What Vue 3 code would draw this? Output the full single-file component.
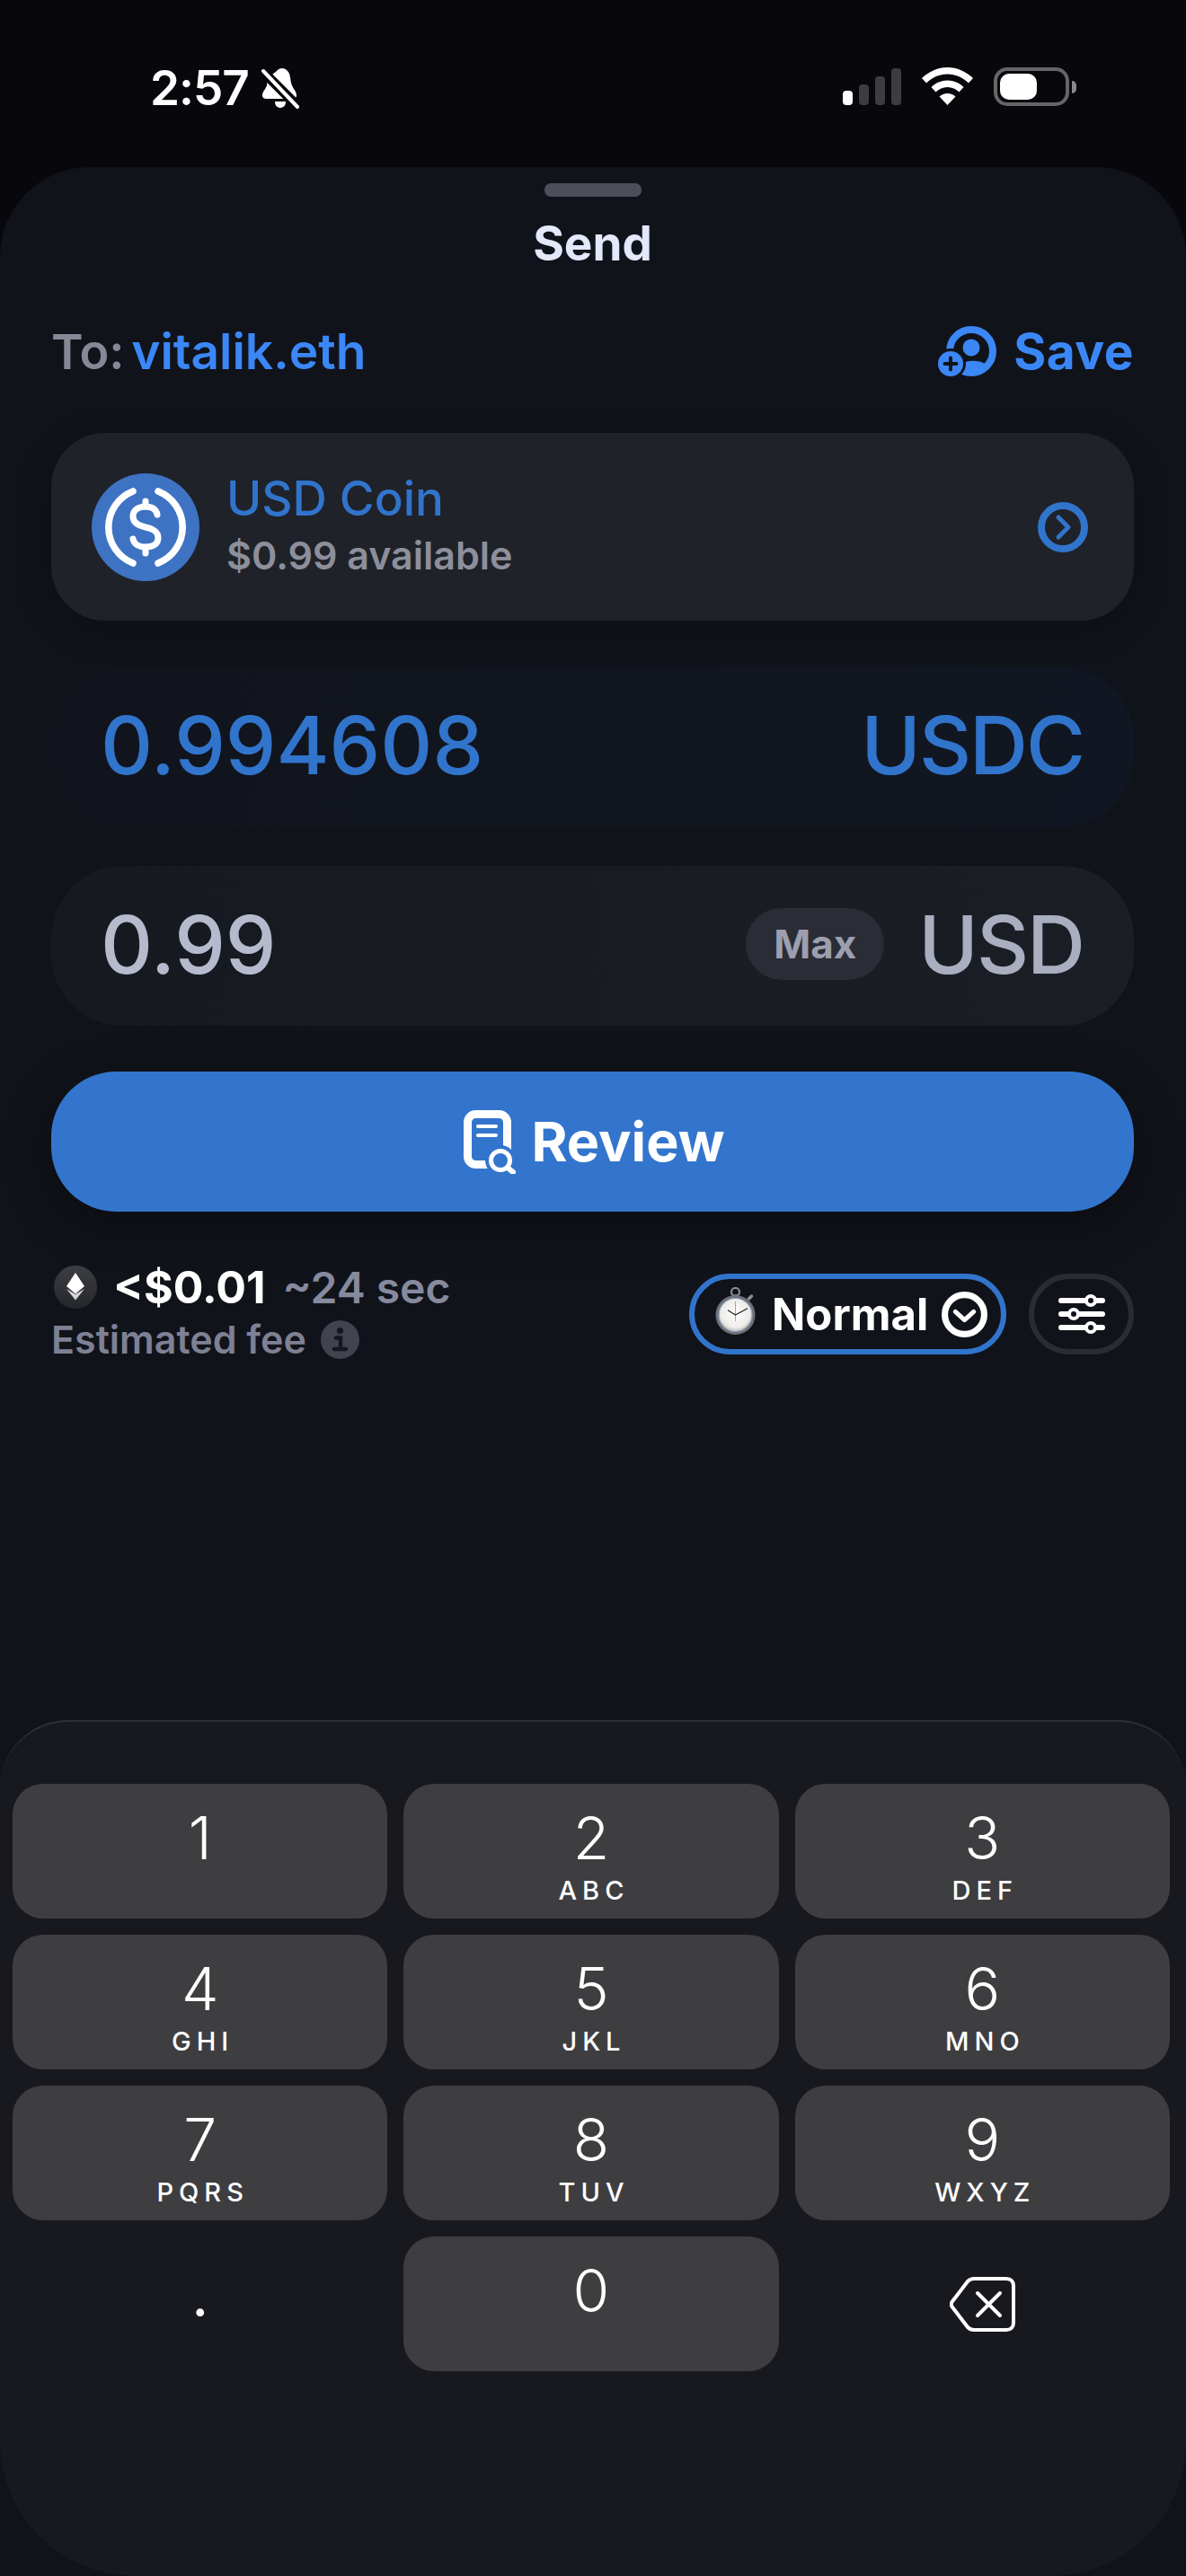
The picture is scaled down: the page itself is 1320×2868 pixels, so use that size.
<template>
  <div class="screen">
    <div class="status">
      <div class="status-left">
        <span class="time">2:57</span>
        <svg class="bell" viewBox="0 0 42 47">
          <path fill="#fff" d="M17 4c3-4 9-4 12 0 3 3 3 8 4 13 1 6 6 9 6 14 0 3-2 4-5 4H6c-3 0-5-1-5-4 0-4 4-7 5-11l1-8z"/>
          <path fill="#fff" d="M15 38h12c0 5-3 7-6 7s-6-2-6-7z"/>
          <path stroke="#08080c" stroke-width="11" d="M0 3l42 42"/>
          <path stroke="#fff" stroke-width="4" stroke-linecap="round" d="M2 4l38 40"/>
        </svg>
      </div>
      <div class="status-right">
        <div class="signal">
          <span v-for="(h, i) in signalBars" :key="i" class="bar" :class="{ on: i === 0 }" :style="{ height: h + 'px' }"></span>
        </div>
        <svg class="wifi" viewBox="0 0 57 42">
          <path fill="#fff" d="M28.500 0C39 0 49 4.500 57 12l-5 5.500C45.500 11 37 7.500 28.500 7.500S11.500 11 5 17.500L0 12C8 4.500 18 0 28.500 0z"/>
          <path fill="#fff" d="M28.500 14.500c7 0 13 2.800 18 7.500l-5 5.500c-3.500-3.400-8-5.500-13-5.500s-9.500 2.100-13 5.500l-5-5.500c5-4.700 11-7.500 18-7.500z"/>
          <path fill="#fff" d="M28.500 29c3.500 0 6.500 1.300 9 3.500L28.500 42l-9-9.500c2.500-2.200 5.500-3.500 9-3.500z"/>
        </svg>
        <div class="battery">
          <div class="battery-body"><div class="battery-fill"></div></div>
          <div class="battery-nub"></div>
        </div>
      </div>
    </div>

    <div class="sheet">
      <div class="handle"></div>
      <div class="title">Send</div>

      <div class="to-row">
        <div class="to"><span class="to-label">To:</span> <span class="to-name">vitalik.eth</span></div>
        <div class="save">
          <svg class="save-icon" viewBox="0 0 65 56">
            <circle cx="37" cy="28" r="24" fill="none" stroke="#3b87f6" stroke-width="8"/>
            <circle cx="37" cy="24" r="9.500" fill="#3b87f6"/>
            <path fill="#3b87f6" d="M21 46c7-9 25-9 33-3 -4 6-10 9-17 9-6 0-12-2-16-6z"/>
            <circle cx="14" cy="42" r="17" fill="#11131a"/>
            <circle cx="14" cy="42" r="14" fill="#3b87f6"/>
            <path stroke="#11131a" stroke-width="4" stroke-linecap="round" d="M14 35.500v13M7.500 42h13"/>
          </svg>
          <span>Save</span>
        </div>
      </div>

      <div class="token-card">
        <svg class="usdc" viewBox="0 0 120 120">
          <circle cx="60" cy="60" r="60" fill="#3e73c4"/>
          <g fill="none" stroke="#fff" stroke-width="7.500" stroke-linecap="round">
            <path d="M46 20A43 43 0 0 0 46 100"/>
            <path d="M74 20A43 43 0 0 1 74 100"/>
            <path stroke-width="7" d="M73 46c-1-6-6-9-13-9-8 0-14 4-14 11 0 6 5 10 14 12 9 2 14 5 14 12 0 7-6 10-14 10-7 0-13-3-14-9"/>
            <path stroke-width="7" d="M60 31v6M60 83v6"/>
          </g>
        </svg>
        <div class="token-text">
          <div class="token-name">USD Coin</div>
          <div class="token-avail">$0.99 available</div>
        </div>
        <svg class="token-go" viewBox="0 0 56 56">
          <circle cx="28" cy="28" r="24" fill="none" stroke="#3174cc" stroke-width="8"/>
          <path fill="none" stroke="#3174cc" stroke-width="5" stroke-linecap="round" stroke-linejoin="round" d="M23 17l11 11-11 11"/>
        </svg>
      </div>

      <div class="amount amount-token">
        <span class="amount-value">0.994608</span>
        <span class="amount-unit">USDC</span>
      </div>

      <div class="amount amount-fiat">
        <span class="amount-value">0.99</span>
        <div class="amount-right">
          <span class="max">Max</span>
          <span class="amount-unit">USD</span>
        </div>
      </div>

      <div class="review">
        <svg class="review-icon" viewBox="0 0 58 71">
          <rect x="4.500" y="4.500" width="44" height="56" rx="9" fill="none" stroke="#fff" stroke-width="9"/>
          <path stroke="#fff" stroke-width="4" stroke-linecap="round" d="M16 18h20M16 28h20"/>
          <circle cx="41" cy="56" r="17" fill="#3375cd"/>
          <circle cx="41" cy="56" r="10.500" fill="none" stroke="#fff" stroke-width="5"/>
          <path stroke="#fff" stroke-width="6" stroke-linecap="round" d="M49 64l6 5"/>
        </svg>
        <span>Review</span>
      </div>

      <div class="fee-row">
        <div class="fee">
          <div class="fee-top">
            <svg class="eth" viewBox="0 0 48 48">
              <defs>
                <linearGradient id="ethbg" x1="0" y1="0" x2="0" y2="1">
                  <stop offset="0" stop-color="#3d3e43"/>
                  <stop offset="1" stop-color="#25262a"/>
                </linearGradient>
              </defs>
              <circle cx="24" cy="24" r="24" fill="url(#ethbg)"/>
              <path fill="#fff" d="M24 8l10 15-10 8.500L14 23z"/>
              <path fill="#fff" opacity=".8" d="M14 26l10 6 10-6-10 12.500z"/>
            </svg>
            <span class="fee-price">&lt;$0.01</span>
            <span class="fee-time">~24 sec</span>
          </div>
          <div class="fee-bottom">
            <span>Estimated fee</span>
            <svg class="info" viewBox="0 0 43 43">
              <circle cx="21.500" cy="21.500" r="21.500" fill="#42434f"/>
              <circle cx="21.500" cy="11.500" r="3.500" fill="#15161e"/>
              <path fill="none" stroke="#15161e" stroke-width="4.500" stroke-linecap="round" d="M17 19.500h5v12M15 32h13"/>
            </svg>
          </div>
        </div>
        <div class="fee-actions">
          <div class="speed">
            <svg class="stopwatch" viewBox="0 0 44 53">
              <defs>
                <radialGradient id="face" cx="0.500" cy="0.450" r="0.550">
                  <stop offset="0" stop-color="#fff"/>
                  <stop offset="0.800" stop-color="#ecebe8"/>
                  <stop offset="1" stop-color="#b9b8b5"/>
                </radialGradient>
              </defs>
              <circle cx="22" cy="5.500" r="4.500" fill="none" stroke="#8a8d93" stroke-width="2.200"/>
              <rect x="19" y="8" width="6" height="4" fill="#777a80"/>
              <path stroke="#8a8d93" stroke-width="3.500" stroke-linecap="round" d="M37 13l3-3"/>
              <circle cx="22" cy="31" r="22" fill="#6d7077"/>
              <circle cx="22" cy="31" r="18.500" fill="url(#face)" stroke="#8ba2bd" stroke-width="1.200"/>
              <path stroke="#e0926a" stroke-width="1" d="M22 16v22"/>
              <path stroke="#22252b" stroke-width="1.300" stroke-linecap="round" d="M22 31l13-7M22 31l-8-5"/>
            </svg>
            <span class="speed-label">Normal</span>
            <svg class="speed-go" viewBox="0 0 50 50">
              <circle cx="25" cy="25" r="21.500" fill="none" stroke="#fff" stroke-width="7"/>
              <path fill="none" stroke="#fff" stroke-width="5" stroke-linecap="round" stroke-linejoin="round" d="M15 22l10 9 10-9"/>
            </svg>
          </div>
          <div class="tune">
            <svg class="tune-icon" viewBox="0 0 52 44">
              <g stroke="#fff" stroke-width="6" stroke-linecap="round">
                <path d="M3 7h46M3 22h46M3 37h46"/>
              </g>
              <g fill="#11131a" stroke="#fff" stroke-width="4">
                <circle cx="36" cy="7" r="5"/>
                <circle cx="17" cy="22" r="5"/>
                <circle cx="36" cy="37" r="5"/>
              </g>
            </svg>
          </div>
        </div>
      </div>

      <div class="pad">
        <div class="keys">
          <div v-for="k in keys" :key="k.d" class="key">
            <span class="digit">{{ k.d }}</span>
            <span class="letters">{{ k.l }}</span>
          </div>
          <div class="key bare">
            <span class="digit dot">.</span>
          </div>
          <div class="key">
            <span class="digit">0</span>
          </div>
          <div class="key bare center">
            <svg class="backspace" viewBox="0 0 73 61">
              <path fill="none" stroke="#fff" stroke-width="4" stroke-linejoin="round" d="M27 2h36c5 0 8 3 8 8v41c0 5-3 8-8 8H27c-3 0-5-1-7-3L4 35c-3-3-3-6 0-9L20 5c2-2 4-3 7-3z"/>
              <path fill="none" stroke="#fff" stroke-width="4" stroke-linecap="round" d="M31 18l25 25M56 18L31 43"/>
            </svg>
          </div>
        </div>
      </div>
    </div>
  </div>
</template>

<script setup>
const signalBars = [16, 23, 32, 41]

const keys = [
  { d: '1', l: '' },
  { d: '2', l: 'ABC' },
  { d: '3', l: 'DEF' },
  { d: '4', l: 'GHI' },
  { d: '5', l: 'JKL' },
  { d: '6', l: 'MNO' },
  { d: '7', l: 'PQRS' },
  { d: '8', l: 'TUV' },
  { d: '9', l: 'WXYZ' },
]
</script>

<style>
html, body {
  margin: 0;
  background: #08080c;
}
</style>

<style scoped>
.screen {
  width: 1320px;
  height: 2868px;
  display: flex;
  flex-direction: column;
  background: #08080c;
  font-family: Inter, "Liberation Sans", sans-serif;
  color: #fff;
  overflow: hidden;
}

/* status bar */
.status {
  height: 186px;
  flex: none;
  display: flex;
  justify-content: space-between;
  align-items: flex-start;
  padding: 75px 122px 0 167px;
  box-sizing: border-box;
}
.status-left {
  display: flex;
  align-items: center;
  gap: 14px;
  height: 47px;
}
.time {
  font-size: 53px;
  font-weight: 600;
  line-height: 47px;
  letter-spacing: -1px;
}
.bell {
  width: 42px;
  height: 47px;
}
.status-right {
  display: flex;
  align-items: flex-start;
  gap: 23px;
}
.signal {
  display: flex;
  align-items: flex-end;
  gap: 7px;
  height: 42px;
}
.bar {
  width: 11px;
  border-radius: 4px;
  background: #3c3d41;
}
.bar.on {
  background: #fff;
}
.wifi {
  width: 57px;
  height: 42px;
}
.battery {
  display: flex;
  align-items: center;
  gap: 3px;
}
.battery-body {
  width: 84px;
  height: 43px;
  box-sizing: border-box;
  border: 4px solid #666669;
  border-radius: 15px;
  padding: 3px;
}
.battery-fill {
  width: 41px;
  height: 29px;
  background: #fff;
  border-radius: 10px;
}
.battery-nub {
  width: 5px;
  height: 14px;
  background: #8a8a8c;
  border-radius: 0 5px 5px 0;
}

/* sheet */
.sheet {
  flex: 1;
  display: flex;
  flex-direction: column;
  background: #11131a;
  border-radius: 100px 100px 0 0;
  padding: 18px 58px 0 57px;
  min-height: 0;
}
.handle {
  width: 108px;
  height: 15px;
  border-radius: 7px;
  background: #4c4e5a;
  align-self: center;
  flex: none;
}
.title {
  margin-top: 26px;
  text-align: center;
  font-size: 53px;
  font-weight: 700;
  line-height: 52px;
  color: #e3e8fa;
}
.to-row {
  margin-top: 66px;
  height: 56px;
  display: flex;
  justify-content: space-between;
  align-items: center;
}
.to {
  font-size: 54px;
  font-weight: 600;
}
.to-label {
  color: #858896;
}
.to-name {
  margin-left: -6px;
  font-size: 55px;
  color: #3b87f6;
}
.save {
  display: flex;
  align-items: center;
  gap: 19px;
  color: #3b87f6;
  font-size: 55px;
  font-weight: 700;
  letter-spacing: 0.5px;
}
.save-icon {
  width: 65px;
  height: 56px;
}

.token-card {
  margin-top: 63px;
  height: 209px;
  flex: none;
  display: flex;
  align-items: center;
  background: #1f2229;
  border-radius: 60px;
  padding: 0 51px 0 45px;
  box-shadow: 0 10px 40px rgba(0, 0, 0, 0.2);
}
.usdc {
  width: 120px;
  height: 120px;
  flex: none;
}
.token-text {
  margin-left: 30px;
  flex: 1;
}
.token-name {
  font-size: 53px;
  line-height: 63px;
  font-weight: 500;
  color: #3174cc;
}
.token-avail {
  font-size: 43px;
  line-height: 63px;
  font-weight: 600;
  color: #8d8f9c;
}
.token-go {
  width: 56px;
  height: 56px;
  flex: none;
}

.amount {
  flex: none;
  box-sizing: border-box;
  display: flex;
  justify-content: space-between;
  align-items: center;
  padding: 0 56px 4px 55px;
  border-radius: 80px;
  font-size: 90px;
  font-weight: 500;
}
.amount-unit {
  letter-spacing: -2px;
}
.amount-token {
  margin-top: 52px;
  height: 177px;
  background: linear-gradient(to right, #11141c, #111722);
  color: #3174cc;
}
.amount-fiat {
  margin-top: 44px;
  height: 178px;
  background: linear-gradient(to right, #171920, #1c1e25);
  color: #b5bacd;
}
.amount-right {
  display: flex;
  align-items: center;
  gap: 38px;
}
.amount-fiat .amount-unit {
  color: #a9aec0;
}
.max {
  width: 154px;
  height: 80px;
  display: flex;
  align-items: center;
  justify-content: center;
  border-radius: 40px;
  background: #2a2c36;
  color: #9c9fb0;
  font-size: 44px;
  font-weight: 700;
}

.review {
  margin-top: 51px;
  height: 156px;
  flex: none;
  box-sizing: border-box;
  display: flex;
  justify-content: center;
  align-items: center;
  gap: 17px;
  padding-left: 4px;
  background: #3375cd;
  border-radius: 72px;
  font-size: 61px;
  font-weight: 700;
  box-shadow: 0 14px 50px rgba(0, 0, 0, 0.35);
}
.review-icon {
  width: 58px;
  height: 71px;
}

.fee-row {
  margin-top: 60px;
  display: flex;
  justify-content: space-between;
  align-items: flex-start;
}
.fee-top {
  display: flex;
  align-items: center;
  margin-left: 3px;
  height: 48px;
}
.eth {
  width: 48px;
  height: 48px;
  margin-right: 18px;
}
.fee-price {
  font-size: 50px;
  font-weight: 700;
}
.fee-time {
  margin-left: 19px;
  font-size: 48px;
  font-weight: 600;
  color: #868a9e;
}
.fee-bottom {
  margin-top: 10px;
  display: flex;
  align-items: center;
  gap: 16px;
  height: 48px;
  font-size: 43px;
  font-weight: 600;
  color: #7e8194;
}
.info {
  width: 43px;
  height: 43px;
}
.fee-actions {
  display: flex;
  gap: 25px;
  margin-top: 9px;
}
.speed {
  width: 353px;
  height: 90px;
  box-sizing: border-box;
  border: 6px solid #3174cc;
  border-radius: 45px;
  display: flex;
  align-items: center;
  padding-left: 23px;
}
.stopwatch {
  width: 45px;
  height: 53px;
  margin-top: -8px;
}
.speed-label {
  margin-left: 18px;
  font-size: 49px;
  font-weight: 700;
}
.speed-go {
  width: 51px;
  height: 51px;
  margin-left: 15px;
}
.tune {
  width: 117px;
  height: 90px;
  box-sizing: border-box;
  border: 6px solid #2a2b35;
  border-radius: 45px;
  display: flex;
  align-items: center;
  justify-content: center;
}
.tune-icon {
  width: 52px;
  height: 44px;
}

/* number pad */
.pad {
  margin: auto -58px 0 -57px;
  height: 953px;
  flex: none;
  box-sizing: border-box;
  background: #18191e;
  border-top: 2px solid #2f3038;
  border-radius: 76px 76px 150px 150px;
  padding: 69px 18px 0 14px;
}
.keys {
  display: grid;
  grid-template-columns: repeat(3, 1fr);
  grid-auto-rows: 150px;
  gap: 18px;
}
.key {
  display: flex;
  flex-direction: column;
  align-items: center;
  background: #3e3e41;
  border-radius: 34px;
  padding-top: 25px;
}
.key.bare {
  background: none;
}
.key.center {
  padding-top: 0;
  justify-content: center;
}
.digit {
  font-size: 66px;
  line-height: 70px;
  font-weight: 350;
}
.dot {
  margin-top: 5px;
  font-weight: 400;
}
.letters {
  margin-top: 9px;
  font-size: 29px;
  line-height: 30px;
  font-weight: 500;
  letter-spacing: 6px;
  margin-right: -6px;
}
.backspace {
  width: 73px;
  height: 61px;
}
</style>
